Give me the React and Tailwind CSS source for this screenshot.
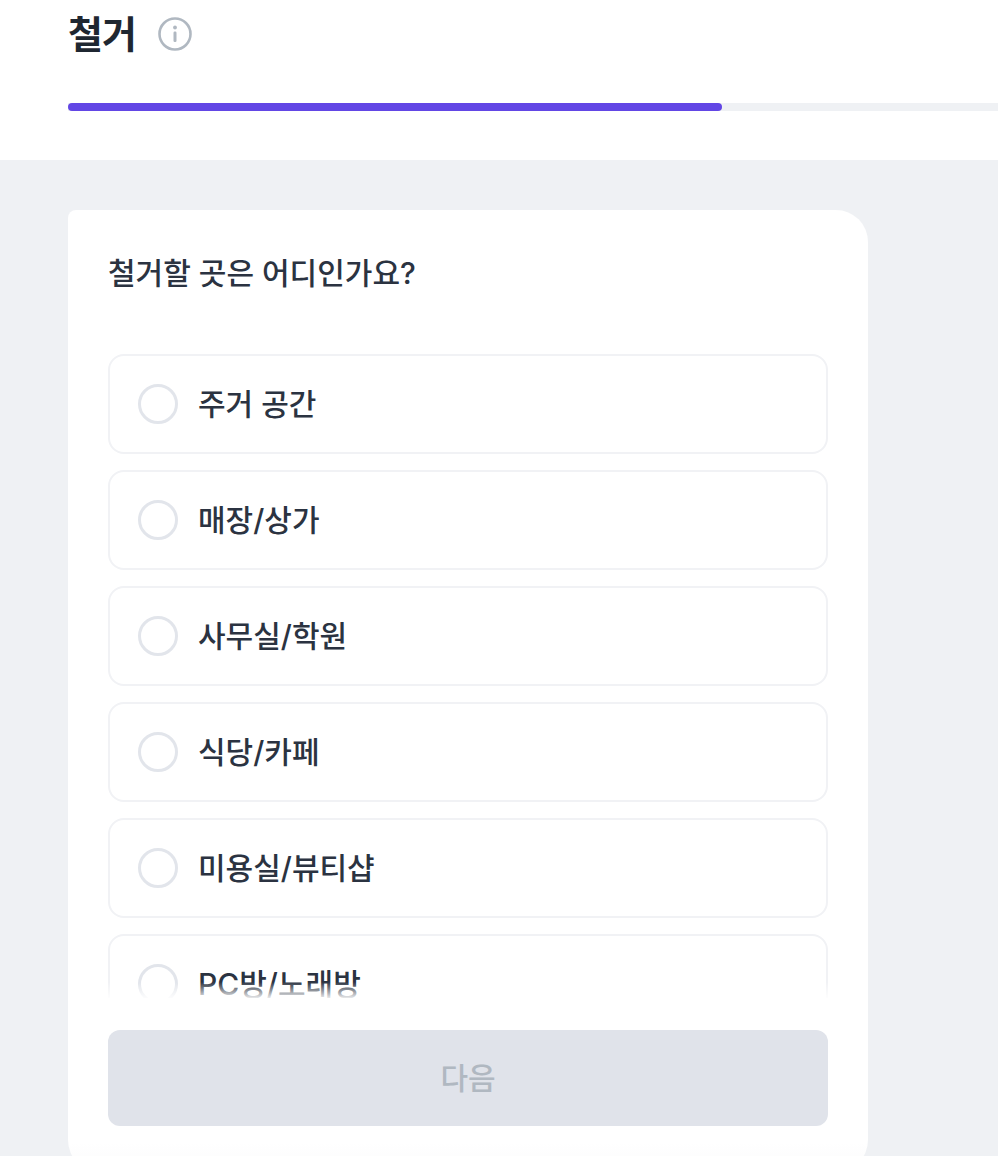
const font = { fontFamily: 'Inter, "Noto Sans CJK KR", sans-serif' };

const options = [
  "주거 공간",
  "매장/상가",
  "사무실/학원",
  "식당/카페",
  "미용실/뷰티샵",
  "PC방/노래방",
];

function InfoIcon() {
  return (
    <svg width="34" height="34" viewBox="0 0 34 34" fill="none">
      <circle cx="17" cy="17" r="15.5" stroke="#b0b8c1" strokeWidth="2.6" />
      <circle cx="17" cy="10.5" r="1.9" fill="#b0b8c1" />
      <rect x="15.5" y="14.5" width="3" height="10.5" rx="1.2" fill="#b0b8c1" />
    </svg>
  );
}

function Option({ label }) {
  return (
    <div className="flex items-center gap-5 h-[100px] shrink-0 pl-[28px] border-2 border-[#f1f2f5] rounded-2xl bg-white">
      <div className="w-10 h-10 rounded-full border-[3px] border-[#e2e5eb]" />
      <span className="text-[30px] font-medium text-[#2b3341]">{label}</span>
    </div>
  );
}

export default function App() {
  return (
    <div className="h-[1156px] overflow-hidden bg-[#eff1f4]" style={font}>
      <header className="h-40 bg-white pl-[68px] overflow-hidden">
        <div className="h-[68px] flex items-center gap-[22px]">
          <h1 className="text-[38px] leading-none font-bold tracking-[-1px] text-[#1f2731]">철거</h1>
          <InfoIcon />
        </div>
        <div className="mt-[35px] h-2 bg-[#eff1f4]">
          <div className="h-2 w-[654px] bg-[#6246e5] rounded-full" />
        </div>
      </header>

      <main className="pl-[68px] pt-[50px]">
        <section className="w-[800px] h-[962px] bg-gradient-to-b from-white from-[97%] to-[#fafafb] rounded-[32px] rounded-tl-lg px-10 pt-10">
          <h2 className="h-[46px] flex items-center text-[30px] font-medium text-[#2b3341]">
            철거할 곳은 어디인가요?
          </h2>
          <div className="relative mt-[58px] h-[644px] overflow-hidden">
            <div className="flex flex-col gap-4">
              {options.map((label) => (
                <Option key={label} label={label} />
              ))}
            </div>
            <div className="absolute inset-x-0 bottom-0 h-5 bg-gradient-to-b from-white/0 from-20% to-white to-[110%]" />
          </div>
          <button className="mt-8 w-full h-24 rounded-xl bg-[#e0e3ea] text-[30px] font-medium text-[#b0b8c1]">
            다음
          </button>
        </section>
      </main>
    </div>
  );
}
